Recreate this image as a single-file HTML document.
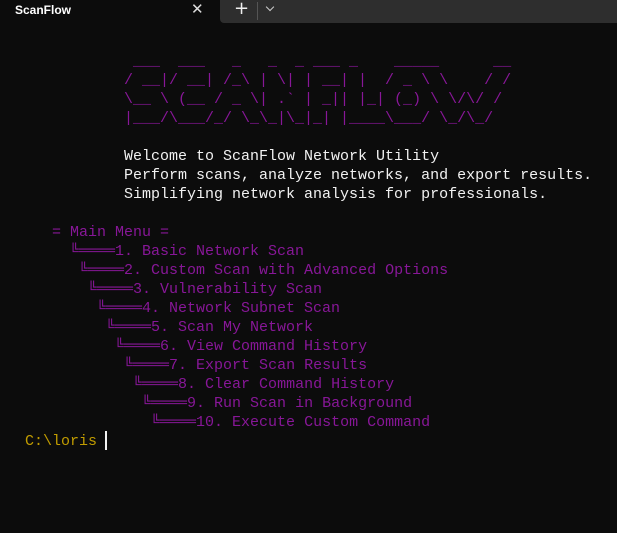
<!DOCTYPE html>
<html><head><meta charset="utf-8"><style>
html,body{margin:0;padding:0;width:617px;height:533px;background:#0c0c0c;overflow:hidden}
.bar{position:absolute;left:0;top:0;width:617px;height:24px;background:#0c0c0c}
.bar2{position:absolute;left:220px;top:0;width:397px;height:23px;background:#2e2e2e;border-bottom-left-radius:4px}
.title{position:absolute;left:15px;top:3px;font:bold 12px "Liberation Sans",sans-serif;color:#fff}
.x{position:absolute;left:191px;top:0px;font:15px "DejaVu Sans",sans-serif;color:#ddd}
.plus{position:absolute;left:234px;top:-2px;font:18px "DejaVu Sans",sans-serif;color:#eee}
.sep{position:absolute;left:257px;top:2px;width:1px;height:18px;background:#555}
.chev{position:absolute;left:267px;top:4px;width:5px;height:5px;border-right:1.3px solid #ccc;border-bottom:1.3px solid #ccc;transform:rotate(45deg)}
pre{position:absolute;left:25px;top:52px;margin:0;font:15px/19px "Liberation Mono","DejaVu Sans Mono",monospace;color:#881798}
.w{color:#f2f2f2}.y{color:#c19c00}
b{font-weight:bold}
.cur{position:absolute;left:105px;top:431px;width:1.5px;height:19px;background:#f2f2f2}
</style></head><body>
<div class="bar"></div><div class="bar2"></div>
<div class="title">ScanFlow</div>
<div class="x">✕</div><div class="plus">+</div><div class="sep"></div><div class="chev"></div>
<pre>            ___  ___   _   _  _ ___ _    _____      __
           / __|/ __| /_\ | \| | __| |  / _ \ \    / /
           \__ \ (__ / _ \| .` | _|| |_| (_) \ \/\/ /
           |___/\___/_/ \_\_|\_|_| |____\___/ \_/\_/

<span class="w">           Welcome to ScanFlow Network Utility
           Perform scans, analyze networks, and export results.
           Simplifying network analysis for professionals.</span>

   = Main Menu =
     <b>╚════</b>1. Basic Network Scan
      <b>╚════</b>2. Custom Scan with Advanced Options
       <b>╚════</b>3. Vulnerability Scan
        <b>╚════</b>4. Network Subnet Scan
         <b>╚════</b>5. Scan My Network
          <b>╚════</b>6. View Command History
           <b>╚════</b>7. Export Scan Results
            <b>╚════</b>8. Clear Command History
             <b>╚════</b>9. Run Scan in Background
              <b>╚════</b>10. Execute Custom Command
<span class="y">C:\loris</span></pre>
<div class="cur"></div>
</body></html>
